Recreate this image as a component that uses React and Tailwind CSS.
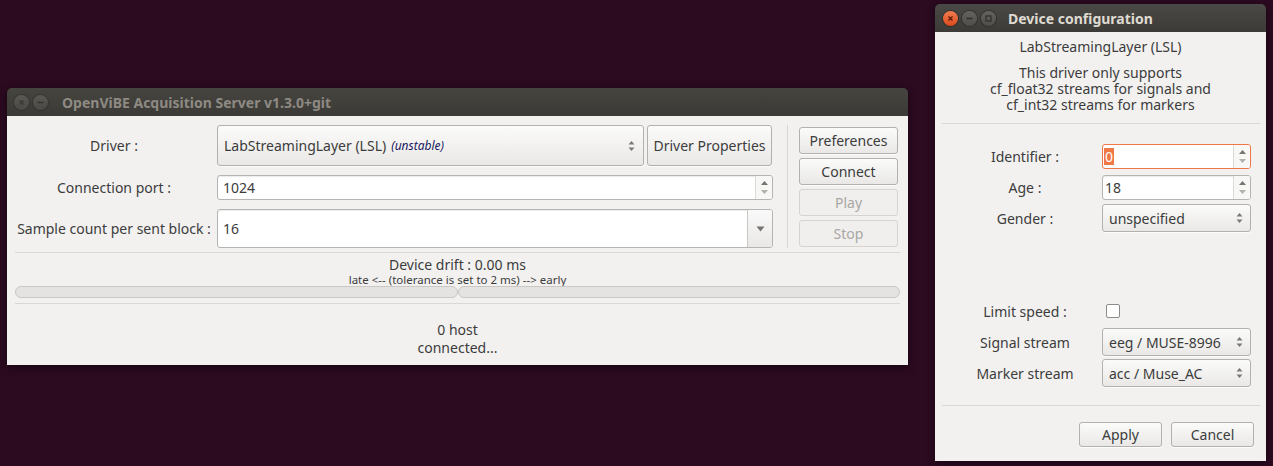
import React from "react";

const text = "text-[#3c3c3c]";
const btn =
  "flex items-center justify-center rounded-[3px] border border-[#b3b1ad] bg-gradient-to-b from-[#fbfbfa] to-[#e9e8e6] shadow-[0_1px_0_rgba(255,255,255,0.8)]";
const btnOff =
  "flex items-center justify-center rounded-[3px] border border-[#d6d4d0] bg-[#f0efee] text-[#a9a7a3]";
const entry =
  "flex items-center rounded-[3px] border border-[#b6b4b0] bg-white shadow-[inset_0_1px_1px_rgba(0,0,0,0.08)]";

const UpDown = ({ className = "" }) => (
  <svg width="7" height="12" viewBox="0 0 7 12" className={className}>
    <path d="M3.5 1 L6.5 4.5 L0.5 4.5 Z" fill="#7a7874" />
    <path d="M3.5 11 L6.5 7.5 L0.5 7.5 Z" fill="#7a7874" />
  </svg>
);

const SpinArrows = () => (
  <div className="ml-auto flex h-full w-[17px] flex-col items-center justify-center gap-[5px] border-l border-[#dcdad6] bg-[#f7f7f6]">
    <svg width="7" height="4" viewBox="0 0 7 4">
      <path d="M3.5 0 L7 4 L0 4 Z" fill="#77756f" />
    </svg>
    <svg width="7" height="4" viewBox="0 0 7 4">
      <path d="M3.5 4 L7 0 L0 0 Z" fill="#b2b0ab" />
    </svg>
  </div>
);

const Dot = ({ red, glyph }) => (
  <div
    className={
      red
        ? "flex h-[15px] w-[15px] items-center justify-center rounded-full bg-gradient-to-b from-[#f37c4f] to-[#d9481a] shadow-[0_0_0_1px_rgba(0,0,0,0.25)]"
        : "flex h-[15px] w-[15px] items-center justify-center rounded-full bg-gradient-to-b from-[#64635e] to-[#4f4e4a] shadow-[0_0_0_1px_rgba(0,0,0,0.25)]"
    }
  >
    <svg width="9" height="9" viewBox="0 0 9 9">
      {glyph === "x" && (
        <path d="M2.5 2.5 L6.5 6.5 M6.5 2.5 L2.5 6.5" stroke={red ? "#5a1a06" : "#37362f"} strokeWidth="1.3" />
      )}
      {glyph === "-" && <path d="M1.5 4.5 L7.5 4.5" stroke="#2f2e2a" strokeWidth="1.4" />}
      {glyph === "o" && <rect x="2" y="2" width="5" height="5" fill="none" stroke="#2f2e2a" strokeWidth="1.2" />}
    </svg>
  </div>
);

const LeftWindow = () => (
  <div className="absolute left-[7px] top-[88px] flex h-[277px] w-[901px] flex-col overflow-hidden rounded-t-[5px] shadow-[0_2px_8px_rgba(0,0,0,0.5)]">
    <div className="flex h-[28px] shrink-0 items-center bg-gradient-to-b from-[#45443f] to-[#3b3a36] pl-[7px]">
      <div className="flex gap-[4px] opacity-70">
        <Dot glyph="x" />
        <Dot glyph="-" />
      </div>
      <span className="ml-[14px] text-[14px] font-bold text-[#8e8a83]">OpenViBE Acquisition Server v1.3.0+git</span>
    </div>
    <div className={`flex flex-1 flex-col bg-[#f2f1f0] ${text}`}>
      <div className="flex pl-[8px] pt-[9px]">
        <div className="flex w-[758px] flex-col">
          <div className="flex h-[41px] items-center">
            <span className="w-[198px] text-center">Driver :</span>
            <div className={`${btn} ml-[4px] h-[41px] w-[427px] !justify-start pl-[6px] pr-[8px]`}>
              <span>LabStreamingLayer (LSL)</span>
              <span className="ml-[5px] text-[12px] italic text-[#1a1a5e]">(unstable)</span>
              <UpDown className="ml-auto" />
            </div>
            <div className={`${btn} ml-[3px] h-[41px] w-[125px]`}>Driver Properties</div>
          </div>
          <div className="mt-[9px] flex h-[25px] items-center">
            <span className="w-[198px] text-center">Connection port :</span>
            <div className={`${entry} ml-[4px] h-[25px] w-[556px] overflow-hidden pl-[5px]`}>
              <span>1024</span>
              <SpinArrows />
            </div>
          </div>
          <div className="mt-[9px] flex h-[39px] items-center">
            <span className="w-[198px] whitespace-nowrap text-center">Sample count per sent block :</span>
            <div className={`${entry} ml-[4px] h-[39px] w-[556px] overflow-hidden pl-[5px]`}>
              <span>16</span>
              <div className="ml-auto flex h-full w-[25px] items-center justify-center border-l border-[#c9c7c3] bg-gradient-to-b from-[#fafafa] to-[#e9e8e6]">
                <svg width="9" height="6" viewBox="0 0 9 6">
                  <path d="M0.5 0.5 L8.5 0.5 L4.5 5.5 Z" fill="#77756f" />
                </svg>
              </div>
            </div>
          </div>
        </div>
        <div className="ml-[14px] h-[123px] w-px bg-[#d8d6d2]" />
        <div className="ml-[11px] mt-[2px] flex w-[99px] flex-col gap-[4px]">
          <div className={`${btn} h-[27px]`}>Preferences</div>
          <div className={`${btn} h-[27px]`}>Connect</div>
          <div className={`${btnOff} h-[27px]`}>Play</div>
          <div className={`${btnOff} h-[27px]`}>Stop</div>
        </div>
      </div>
      <div className="mx-[8px] mt-[4px] h-px bg-[#dad8d4]" />
      <div className="mt-[3px] text-center leading-[18px]">Device drift : 0.00 ms</div>
      <div className="text-center text-[11.5px] leading-[12px]">late &lt;-- (tolerance is set to 2 ms) --&gt; early</div>
      <div className="mx-[8px] mt-0 flex h-[12px]">
        <div className="h-full w-[443px] rounded-full border border-[#cac8c4] bg-[#e4e3e1]" />
        <div className="h-full flex-1 rounded-full border border-[#cac8c4] bg-[#e4e3e1]" />
      </div>
      <div className="mx-[8px] mt-[5px] h-px bg-[#dad8d4]" />
      <div className="mt-[17px] text-center leading-[18px]">0 host</div>
      <div className="text-center leading-[18px]">connected...</div>
    </div>
  </div>
);

const Row = ({ label, children, className = "" }) => (
  <div className={`flex items-center ${className}`}>
    <span className="ml-[15px] w-[150px] text-center">{label}</span>
    <div className="ml-[2px]">{children}</div>
  </div>
);

const Combo = ({ value, h }) => (
  <div className={`${btn} ${h} w-[149px] !justify-start pl-[6px] pr-[7px]`}>
    <span>{value}</span>
    <UpDown className="ml-auto" />
  </div>
);

const RightWindow = () => (
  <div className="absolute left-[935px] top-[4px] flex h-[457px] w-[331px] flex-col overflow-hidden rounded-t-[5px] shadow-[0_2px_8px_rgba(0,0,0,0.5)]">
    <div className="flex h-[28px] shrink-0 items-center bg-gradient-to-b from-[#4a4945] to-[#3c3b37] pl-[8px]">
      <div className="flex gap-[4px]">
        <Dot red glyph="x" />
        <Dot glyph="-" />
        <Dot glyph="o" />
      </div>
      <span className="ml-[12px] text-[14px] font-bold text-[#dfdbd2]">Device configuration</span>
    </div>
    <div className={`flex flex-1 flex-col bg-[#f2f1f0] ${text}`}>
      <div className="pt-[6px] text-center leading-[18px]">LabStreamingLayer (LSL)</div>
      <div className="mt-[9px] flex flex-col items-center">
        <span className="h-[16px] leading-[16px]">This driver only supports</span>
        <span className="h-[16px] leading-[16px]">cf_float32 streams for signals and</span>
        <span className="h-[16px] leading-[16px]">cf_int32 streams for markers</span>
      </div>
      <div className="ml-[7px] mr-[6px] mt-[10px] h-px bg-[#dad8d4]" />
      <Row label="Identifier :" className="mt-[20px] h-[25px]">
        <div className="flex h-[25px] w-[149px] items-center overflow-hidden rounded-[3px] border border-[#f07746] bg-white pl-[1px]">
          <span className="bg-[#f07746] px-[1px] leading-[17px] text-white">0</span>
          <SpinArrows />
        </div>
      </Row>
      <Row label="Age :" className="mt-[6px] h-[25px]">
        <div className={`${entry} h-[25px] w-[149px] overflow-hidden pl-[2px]`}>
          <span>18</span>
          <SpinArrows />
        </div>
      </Row>
      <Row label="Gender :" className="mt-[4px] h-[28px]">
        <Combo value="unspecified" h="h-[28px]" />
      </Row>
      <Row label="Limit speed :" className="mt-[69px] h-[20px]">
        <div className="ml-[4px] h-[14px] w-[14px] rounded-[2px] border border-[#8d8b87] bg-white" />
      </Row>
      <Row label="Signal stream" className="mt-[7px] h-[28px]">
        <Combo value="eeg / MUSE-8996" h="h-[28px]" />
      </Row>
      <Row label="Marker stream" className="mt-[3px] h-[28px]">
        <Combo value="acc / Muse_AC" h="h-[28px]" />
      </Row>
      <div className="ml-[7px] mr-[6px] mt-[18px] h-px bg-[#dad8d4]" />
      <div className="mt-[16px] flex justify-end gap-[9px] pr-[12px]">
        <div className={`${btn} h-[25px] w-[83px]`}>Apply</div>
        <div className={`${btn} h-[25px] w-[83px]`}>Cancel</div>
      </div>
    </div>
  </div>
);

export default function App() {
  return (
    <div className="relative h-[466px] w-[1273px] overflow-hidden bg-[#2c0a20] font-['Noto_Sans',sans-serif] text-[14px]">
      <LeftWindow />
      <RightWindow />
    </div>
  );
}
